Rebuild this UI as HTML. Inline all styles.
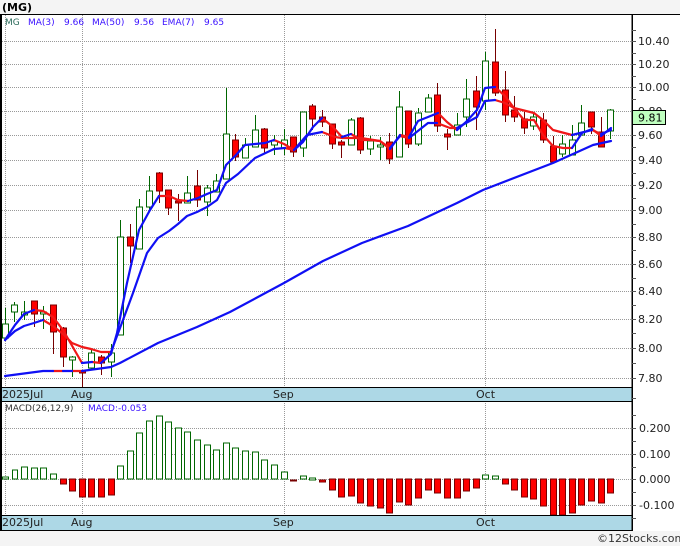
<!DOCTYPE html>
<html><head><meta charset="utf-8"><style>
html,body{margin:0;padding:0;background:#f4f4f4;width:680px;height:546px;overflow:hidden}
svg{display:block}
text{font-family:"DejaVu Sans",sans-serif;font-size:11px;fill:#222}
.c{shape-rendering:crispEdges}
.l{fill:none;stroke-width:2.2;stroke-linejoin:round;stroke-linecap:round}
</style></head><body>
<svg width="680" height="546" viewBox="0 0 680 546" xmlns="http://www.w3.org/2000/svg">
<rect x="0" y="0" width="680" height="546" fill="#f4f4f4"/>
<rect x="0" y="14" width="680" height="517" fill="#fff"/>
<text x="2" y="11" style="font-weight:bold;font-size:11px;fill:#000">(MG)</text>
<g class="c" stroke="#999" stroke-width="1" stroke-dasharray="1 1" fill="none">
<path d="M2 41.5H632M2 64.5H632M2 87.5H632M2 111.5H632M2 135.5H632M2 160.5H632M2 185.5H632M2 210.5H632M2 237.5H632M2 264.5H632M2 291.5H632M2 319.5H632M2 348.5H632M2 378.5H632"/>
<path d="M2 428.5H632M2 454.5H632M2 479.5H632M2 505.5H632"/>
<path d="M5.5 15V387M82.5 15V387M284.5 15V387M485.5 15V387M5.5 401V515M82.5 401V515M284.5 401V515M485.5 401V515"/>
</g>
<g class="c" fill="none" stroke="#060" stroke-width="1">
<path d="M5.5 308V338M14.5 302V322M24.5 301V320M43.5 306V329M72.5 356V377M91.5 350V370M111.5 344V377M120.5 220V335M139.5 199V249M149.5 176V212M187.5 176V203M207.5 185V216M216.5 174V192M226.5 88V179M245.5 138V158M255.5 115V147M274.5 135V155M284.5 129V155M303.5 112V157M351.5 118V145M370.5 136V155M380.5 137V160M399.5 91V157M418.5 108V146M428.5 94V112M457.5 113V135M466.5 79V127M485.5 52V110M533.5 113V130M562.5 135V157M572.5 125V155M581.5 105V135M610.5 109V139"/>
<path fill="#fff" d="M2.500 324H8.500V338H2.500ZM11.500 305H17.500V312H11.500ZM21.500 312H27.500V315H21.500ZM40.500 312H46.500V314H40.500ZM69.500 357H75.500V360H69.500ZM88.500 353H94.500V368H88.500ZM108.500 353H114.500V362H108.500ZM117.500 237H123.500V335H117.500ZM136.500 207H142.500V249H136.500ZM146.500 191H152.500V207H146.500ZM184.500 193H190.500V203H184.500ZM204.500 188H210.500V202H204.500ZM213.500 181H219.500V192H213.500ZM223.500 134H229.500V179H223.500ZM242.500 145H248.500V158H242.500ZM252.500 130H258.500V147H252.500ZM271.500 141H277.500V145H271.500ZM281.500 140H287.500V148H281.500ZM300.500 112H306.500V148H300.500ZM348.500 120H354.500V145H348.500ZM367.500 141H373.500V149H367.500ZM377.500 145H383.500V147H377.500ZM396.500 107H402.500V157H396.500ZM415.500 113H421.500V144H415.500ZM425.500 98H431.500V112H425.500ZM454.500 125H460.500V135H454.500ZM463.500 99H469.500V117H463.500ZM482.500 61H488.500V101H482.500ZM530.500 117H536.500V126H530.500ZM559.500 144H565.500V154H559.500ZM569.500 140H575.500V155H569.500ZM578.500 123H584.500V135H578.500ZM607.500 110H613.500V131H607.500Z"/>
</g>
<g class="c" fill="none" stroke="#700" stroke-width="1">
<path d="M34.500 301V327M53.500 305V354M63.500 327V367M82.500 370V387M101.500 355V375M130.500 224V263M159.500 172V203M168.500 190V215M178.500 194V221M197.500 170V207M235.500 134V161M264.500 128V153M293.500 137V157M312.500 104V130M322.500 110V127M332.500 124V149M341.500 140V158M360.500 117V154M389.500 133V164M408.500 111V148M437.500 83V132M447.500 129V150M476.500 76V130M495.500 29V96M505.500 71V122M514.500 96V122M524.500 112V134M543.500 113V143M553.500 136V163M591.500 112V134M601.500 117V147"/>
<path fill="#f00" d="M31.500 301H37.500V314H31.500ZM50.500 305H56.500V332H50.500ZM60.500 328H66.500V357H60.500ZM79.500 371H85.500V373H79.500ZM98.500 357H104.500V363H98.500ZM127.500 237H133.500V246H127.500ZM156.500 173H162.500V191H156.500ZM165.500 190H171.500V208H165.500ZM175.500 201H181.500V203H175.500ZM194.500 186H200.500V200H194.500ZM232.500 140H238.500V157H232.500ZM261.500 129H267.500V148H261.500ZM290.500 137H296.500V152H290.500ZM309.500 106H315.500V119H309.500ZM319.500 117H325.500V122H319.500ZM329.500 124H335.500V144H329.500ZM338.500 142H344.500V145H338.500ZM357.500 118H363.500V150H357.500ZM386.500 142H392.500V159H386.500ZM405.500 111H411.500V144H405.500ZM434.500 95H440.500V126H434.500ZM444.500 134H450.500V137H444.500ZM473.500 91H479.500V107H473.500ZM492.500 62H498.500V93H492.500ZM502.500 90H508.500V115H502.500ZM511.500 110H517.500V117H511.500ZM521.500 119H527.500V128H521.500ZM540.500 120H546.500V140H540.500ZM550.500 146H556.500V162H550.500ZM588.500 112H594.500V127H588.500ZM598.500 132H604.500V147H598.500Z"/>
</g>
<g class="l" stroke="#f01818">
<polyline points="53,371 63,371"/><polyline points="72,371 82,371"/>
<polyline points="34,310 43,311 53,317 63,330 82,363"/>
<polyline points="92,362 101,363"/>
<polyline points="159,196 169,196 178,200 188,201"/>
<polyline points="274,140 284,144 294,150"/>
<polyline points="322,118 332,126 342,137"/>
<polyline points="351,134 361,140 370,140 380,141 390,149"/>
<polyline points="400,135 409,137"/>
<polyline points="438,113 447,122 457,130"/>
<polyline points="495,87 505,96 514,108 524,120 534,120 543,135 553,146 563,148 572,148"/>
<polyline points="592,129 601,136"/>
<polyline points="43,320 53,326 63,334 72,343 82,347 91,349 101,352 111,352"/>
<polyline points="285,148 294,150"/>
<polyline points="322,132 335,137 342,138 361,138 380,141 390,148"/>
<polyline points="400,136 409,138"/>
<polyline points="437,123 450,128 457,128"/>
<polyline points="495,100 505,103 514,108 534,113 543,120 553,130 572,135"/>
<polyline points="592,130 601,134"/>
</g>
<g class="l" stroke="#1010f4">
<polyline points="5,376 43,371 53,371"/><polyline points="63,371 72,371"/>
<polyline points="82,371 111,367 120,363 158,343 197,327 230,312 284,283 323,261 362,243 408,226 457,203 483,190 553,163 593,145 611,141"/>
<polyline points="5,340 15,325 24,314 34,310"/>
<polyline points="82,363 92,362"/>
<polyline points="101,363 111,354 117,333 127,283 139,230 150,210 159,196"/>
<polyline points="188,201 198,198 207,194 217,190 226,165 236,155 245,145 255,144 265,143 274,140"/>
<polyline points="294,150 303,142 313,127 322,118"/>
<polyline points="342,137 351,134"/>
<polyline points="390,149 400,135"/>
<polyline points="390,148 400,136"/>
<polyline points="409,137 418,121 438,113"/>
<polyline points="457,130 466,122 477,110 485,88 495,87"/>
<polyline points="572,148 582,133 592,129"/>
<polyline points="601,136 611,128"/>
<polyline points="5,340 15,331 24,326 34,323 43,320"/>
<polyline points="111,352 120,328 133,293 147,253 158,238 169,231 178,224 187,216 197,212 207,207 217,200 226,183 238,174 255,158 274,149 285,148"/>
<polyline points="294,150 307,135 322,132"/>
<polyline points="409,138 428,123 437,123"/>
<polyline points="457,128 477,117 485,101 495,100"/>
<polyline points="572,135 592,130"/>
<polyline points="601,134 611,130"/>
</g>
<g class="c" fill="none" stroke="#060" stroke-width="1">
<path fill="#fff" d="M2.500 477H8.500V479H2.500ZM12.500 470H17.500V479H12.500ZM21.500 467H27.500V479H21.500ZM31.500 468H37.500V479H31.500ZM40.500 468H46.500V479H40.500ZM50.500 474H56.500V479H50.500ZM117.500 466H123.500V479H117.500ZM127.500 451H133.500V479H127.500ZM136.500 433H142.500V479H136.500ZM146.500 421H152.500V479H146.500ZM156.500 416H162.500V479H156.500ZM165.500 422H171.500V479H165.500ZM175.500 428H181.500V479H175.500ZM184.500 432H190.500V479H184.500ZM194.500 440H200.500V479H194.500ZM204.500 445H210.500V479H204.500ZM213.500 450H219.500V479H213.500ZM223.500 443H229.500V479H223.500ZM232.500 448H238.500V479H232.500ZM242.500 451H248.500V479H242.500ZM252.500 452H258.500V479H252.500ZM261.500 460H267.500V479H261.500ZM271.500 465H277.500V479H271.500ZM281.500 472H287.500V479H281.500ZM300.500 476H306.500V479H300.500ZM309.500 478H315.500V480H309.500ZM482.500 475H488.500V479H482.500ZM492.500 476H498.500V479H492.500Z"/>
</g>
<g class="c" fill="#f00" stroke="#700" stroke-width="1">
<path d="M60.500 479H66.500V484H60.500ZM69.500 479H75.500V491H69.500ZM79.500 479H85.500V497H79.500ZM88.500 479H94.500V497H88.500ZM98.500 479H104.500V497H98.500ZM108.500 479H114.500V495H108.500ZM290.500 480H296.500V481H290.500ZM319.500 480H325.500V482H319.500ZM329.500 479H335.500V490H329.500ZM338.500 479H344.500V497H338.500ZM348.500 479H354.500V496H348.500ZM357.500 479H363.500V503H357.500ZM367.500 479H373.500V506H367.500ZM377.500 479H383.500V508H377.500ZM386.500 479H392.500V513H386.500ZM396.500 479H402.500V502H396.500ZM405.500 479H411.500V505H405.500ZM415.500 479H421.500V498H415.500ZM425.500 479H431.500V490H425.500ZM434.500 479H440.500V493H434.500ZM444.500 479H450.500V498H444.500ZM454.500 479H460.500V498H454.500ZM463.500 479H469.500V491H463.500ZM473.500 479H479.500V488H473.500ZM502.500 479H508.500V484H502.500ZM511.500 479H517.500V490H511.500ZM521.500 479H527.500V497H521.500ZM530.500 479H536.500V499H530.500ZM540.500 479H546.500V506H540.500ZM550.500 479H556.500V515H550.500ZM559.500 479H565.500V515H559.500ZM569.500 479H575.500V513H569.500ZM578.500 479H584.500V505H578.500ZM588.500 479H594.500V501H588.500ZM598.500 479H604.500V503H598.500ZM607.500 479H613.500V493H607.500Z"/>
</g>
<g class="c">
<rect x="0" y="388" width="632" height="13" fill="#add8e6"/>
<rect x="0" y="516" width="632" height="14" fill="#add8e6"/>
<rect x="0" y="14" width="680" height="1" fill="#000"/>
<rect x="0" y="15" width="2" height="515" fill="#000"/>
<rect x="631.500" y="14" width="1.500" height="517" fill="#000"/>
<rect x="0" y="387" width="633" height="1" fill="#000"/>
<rect x="0" y="401" width="633" height="1" fill="#000"/>
<rect x="0" y="515" width="633" height="1" fill="#000"/>
<rect x="0" y="530" width="633" height="1" fill="#000"/>
<path fill="none" stroke="#555" stroke-width="1" d="M632 30.500H636M632 41.500H636M632 53.500H636M632 64.500H636M632 76.500H636M632 87.500H636M632 99.500H636M632 135.500H636M632 147.500H636M632 160.500H636M632 173.500H636M632 185.500H636M632 198.500H636M632 210.500H636M632 224.500H636M632 237.500H636M632 250.500H636M632 264.500H636M632 278.500H636M632 291.500H636M632 305.500H636M632 319.500H636M632 333.500H636M632 348.500H636M632 363.500H636M632 378.500H636M632 398.500H636M632 415.500H636M632 428.500H636M632 441.500H636M632 454.500H636M632 467.500H636M632 479.500H636M632 492.500H636M632 505.500H636M632 518.500H636"/>
</g>
<text x="5" y="25" style="font-size:9px;fill:#2a6a5a">MG</text>
<g style="font-size:9px">
<text x="28" y="25" style="font-size:9px;fill:#3a10ff">MA(3)</text>
<text x="64" y="25" style="font-size:9px;fill:#3a10ff">9.66</text>
<text x="92" y="25" style="font-size:9px;fill:#3a10ff">MA(50)</text>
<text x="134" y="25" style="font-size:9px;fill:#3a10ff">9.56</text>
<text x="162" y="25" style="font-size:9px;fill:#3a10ff">EMA(7)</text>
<text x="204" y="25" style="font-size:9px;fill:#3a10ff">9.65</text>
<text x="5" y="411" style="font-size:9px;fill:#333">MACD(26,12,9)</text>
<text x="88" y="411" style="font-size:9px;fill:#3a10ff">MACD:-0.053</text>
</g>
<text x="638" y="45">10.40</text>
<text x="638" y="68">10.20</text>
<text x="638" y="91">10.00</text>
<text x="638" y="115">9.80</text>
<text x="638" y="139">9.60</text>
<text x="638" y="164">9.40</text>
<text x="638" y="189">9.20</text>
<text x="638" y="214">9.00</text>
<text x="638" y="241">8.80</text>
<text x="638" y="268">8.60</text>
<text x="638" y="295">8.40</text>
<text x="638" y="323">8.20</text>
<text x="638" y="352">8.00</text>
<text x="638" y="382">7.80</text>
<text x="639" y="432">0.200</text>
<text x="639" y="458">0.100</text>
<text x="639" y="483">0.000</text>
<text x="639" y="509">-0.100</text>
<rect class="c" x="632.500" y="110.500" width="33" height="14" fill="#bfffbf" stroke="#000"/>
<text x="638" y="121.500" style="fill:#000">9.81</text>
<text x="2" y="398">2025Jul</text><text x="71" y="398">Aug</text><text x="273" y="398">Sep</text><text x="476" y="398">Oct</text>
<text x="2" y="526">2025Jul</text><text x="71" y="526">Aug</text><text x="273" y="526">Sep</text><text x="476" y="526">Oct</text>
<text x="597" y="542" style="fill:#333">©12Stocks.com</text>
</svg>
</body></html>
